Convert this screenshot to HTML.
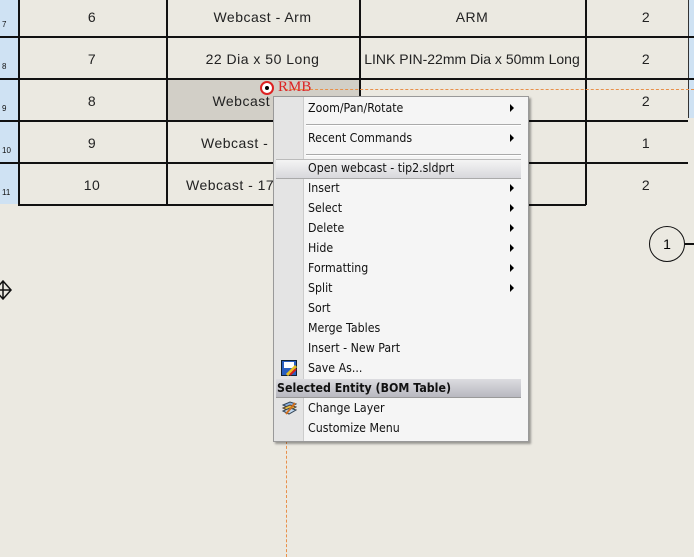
<!DOCTYPE html>
<html><head><style>
body{margin:0;width:694px;height:557px;overflow:hidden;background:#ebe9e1;position:relative;font-family:"Liberation Sans",sans-serif}
.a{position:absolute}
.h{position:absolute;height:1.5px;background:#111}
.v{position:absolute;width:1.5px;background:#111}
.t{position:absolute;font-size:14px;color:#222;text-align:center;letter-spacing:.5px}
.rn{position:absolute;left:2px;font-size:8px;color:#111}
.m{position:absolute;left:308px;font-size:12px;color:#111;font-family:"DejaVu Sans",sans-serif;transform:scaleX(.92);transform-origin:left}
.ar{position:absolute;left:510px;width:0;height:0;border-left:4px solid #000;border-top:4px solid transparent;border-bottom:4px solid transparent}
</style></head><body>
<div class="a" style="left:0;top:0;width:18px;height:204px;background:#cfe2f3"></div>
<div class="a" style="left:167px;top:79px;width:192px;height:41px;background:#d2cfc7"></div>
<div class="a" style="left:688px;top:0;width:6px;height:118px;background:#cfe2f3;border-left:1px solid #333"></div>
<div class="h" style="left:0;top:36px;width:694px"></div>
<div class="h" style="left:0;top:78px;width:694px"></div>
<div class="h" style="left:0;top:120px;width:688px"></div>
<div class="h" style="left:0;top:162px;width:688px"></div>
<div class="h" style="left:18px;top:204px;width:568px"></div>
<div class="v" style="left:18px;top:0;height:205px"></div>
<div class="v" style="left:166px;top:0;height:205px"></div>
<div class="v" style="left:359px;top:0;height:205px"></div>
<div class="v" style="left:585px;top:0;height:205px"></div>
<div class="rn" style="top:20px">7</div><div class="rn" style="top:62px">8</div><div class="rn" style="top:104px">9</div><div class="rn" style="top:146px">10</div><div class="rn" style="top:188px">11</div>
<div class="t" style="left:18px;width:148px;top:9px">6</div>
<div class="t" style="left:18px;width:148px;top:51px">7</div>
<div class="t" style="left:18px;width:148px;top:93px">8</div>
<div class="t" style="left:18px;width:148px;top:135px">9</div>
<div class="t" style="left:18px;width:148px;top:177px">10</div>
<div class="t" style="left:166px;width:193px;top:9px">Webcast - Arm</div>
<div class="t" style="left:166px;width:193px;top:51px">22 Dia x 50 Long</div>
<div class="t" style="left:166px;width:193px;top:93px">Webcast - Tip2</div>
<div class="t" style="left:201px;top:135px;text-align:left">Webcast - Link</div>
<div class="t" style="left:186px;top:177px;text-align:left">Webcast - 17 Pin</div>
<div class="t" style="left:359px;width:226px;top:9px">ARM</div>
<div class="t" style="left:359px;width:226px;top:51px;letter-spacing:0">LINK PIN-22mm Dia x 50mm Long</div>
<div class="t" style="left:586px;width:120px;top:9px">2</div>
<div class="t" style="left:586px;width:120px;top:51px">2</div>
<div class="t" style="left:586px;width:120px;top:93px">2</div>
<div class="t" style="left:586px;width:120px;top:135px">1</div>
<div class="t" style="left:586px;width:120px;top:177px">2</div>
<div class="a" style="left:285px;top:89px;width:409px;border-top:1px dashed #e8904a"></div>
<div class="a" style="left:286px;top:441px;height:116px;border-left:1px dashed #e8904a"></div>
<div class="a" style="left:260px;top:81px;width:10px;height:10px;border:2px solid #d22;border-radius:50%;background:#fff"></div>
<div class="a" style="left:265px;top:86px;width:4px;height:4px;background:#000;border-radius:50%"></div>
<div class="a" style="left:278px;top:79px;font-family:'Liberation Serif',serif;font-size:15px;color:#d22">RMB</div>
<div class="a" style="left:649px;top:226px;width:34px;height:34px;border:1.5px solid #111;border-radius:50%;text-align:center;line-height:34px;font-size:14px">1</div>
<div class="a" style="left:685px;top:243px;width:9px;height:1.5px;background:#111"></div>
<svg class="a" style="left:0;top:280px" width="14" height="20"><path d="M-5 10L3 1L11 10L3 19Z M-5 10H11 M3 1V19" stroke="#111" stroke-width="1.5" fill="none"/></svg>
<div class="a" style="left:273px;top:96px;width:254px;height:344px;background:#f5f5f5;border:1px solid #999;box-shadow:2px 2px 2px rgba(0,0,0,.35)"></div>
<div class="a" style="left:274px;top:97px;width:29px;height:344px;background:#e4e4e4;border-right:1px solid #ccc"></div>
<div class="a" style="left:306px;top:124px;width:215px;height:1px;background:#aaa;border-bottom:1px solid #fff"></div>
<div class="a" style="left:306px;top:154px;width:215px;height:1px;background:#aaa;border-bottom:1px solid #fff"></div>
<div class="a" style="left:276px;top:159px;width:245px;height:18px;background:linear-gradient(#f4f4f4,#d8d8dc);border-top:1px solid #bbb;border-bottom:1px solid #aaa"></div>
<div class="a" style="left:276px;top:379px;width:245px;height:18px;background:linear-gradient(#dcdce0,#b8b8c0);border-bottom:1px solid #999"></div>
<div class="m" style="top:101px">Zoom/Pan/Rotate</div><div class="ar" style="top:104px"></div>
<div class="m" style="top:131px">Recent Commands</div><div class="ar" style="top:134px"></div>
<div class="m" style="top:161px">Open webcast - tip2.sldprt</div>
<div class="m" style="top:181px">Insert</div><div class="ar" style="top:184px"></div>
<div class="m" style="top:201px">Select</div><div class="ar" style="top:204px"></div>
<div class="m" style="top:221px">Delete</div><div class="ar" style="top:224px"></div>
<div class="m" style="top:241px">Hide</div><div class="ar" style="top:244px"></div>
<div class="m" style="top:261px">Formatting</div><div class="ar" style="top:264px"></div>
<div class="m" style="top:281px">Split</div><div class="ar" style="top:284px"></div>
<div class="m" style="top:301px">Sort</div>
<div class="m" style="top:321px">Merge Tables</div>
<div class="m" style="top:341px">Insert - New Part</div>
<div class="m" style="top:361px">Save As...</div>
<div class="m" style="top:381px;left:277px;font-weight:bold">Selected Entity (BOM Table)</div>
<div class="m" style="top:401px">Change Layer</div>
<div class="m" style="top:421px">Customize Menu</div>
<svg class="a" style="left:281px;top:360px" width="16" height="16"><rect x="0.5" y="0.5" width="15" height="15" fill="#2a5fc0" stroke="#123"/><rect x="3" y="2" width="10" height="6" fill="#fff"/><path d="M6 15L15 6" stroke="#e8c020" stroke-width="3"/><path d="M9 15L15 9" stroke="#d02020" stroke-width="2"/></svg>
<svg class="a" style="left:281px;top:400px" width="16" height="16"><path d="M2 5L9 2L15 4L8 8Z" fill="#8ab0e0" stroke="#345"/><path d="M2 8L9 5L15 7L8 11Z" fill="#e8c040" stroke="#543"/><path d="M2 11L9 8L15 10L8 14Z" fill="#c0d8f0" stroke="#345"/><path d="M5 14L14 3" stroke="#d07020" stroke-width="2"/></svg>
</body></html>
